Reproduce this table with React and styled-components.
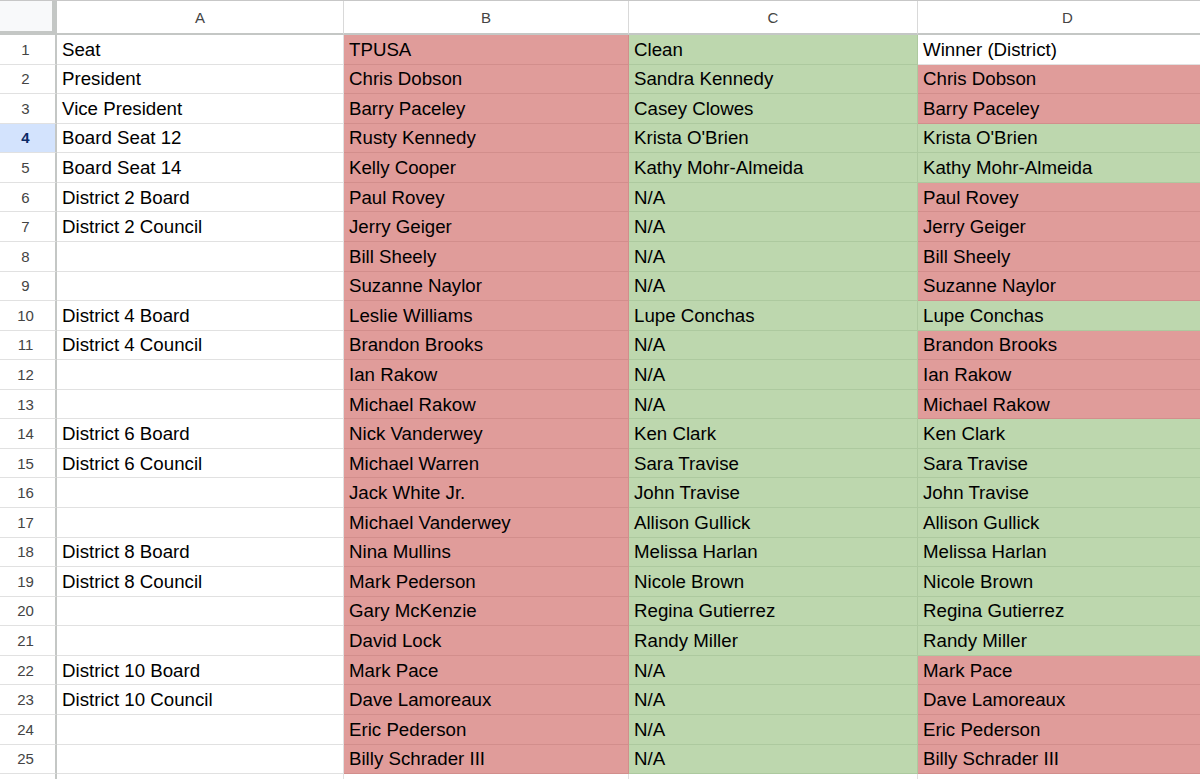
import styled, { createGlobalStyle } from 'styled-components';

const red = '#e09c9a';
const green = '#bdd7ae';
const ROW_H = 29.57;

const GlobalStyle = createGlobalStyle`
  html, body {
    margin: 0;
    padding: 0;
    background: #fff;
    overflow: hidden;
  }
  body {
    font-family: "Liberation Sans", Arial, sans-serif;
  }
`;

const Sheet = styled.div`
  width: 1200px;
  height: 779px;
  overflow: hidden;
  border-top: 1px solid #c7c7c7;
  box-sizing: border-box;
  display: grid;
  grid-template-columns: 57px 287px 285px 289px 300px;
  grid-template-rows: 34px;
  grid-auto-rows: ${ROW_H}px;
`;

const Corner = styled.div`
  background: #f8f9fa;
  border-right: 5px solid #c4c7c5;
  border-bottom: 4px solid #c4c7c5;
  box-sizing: border-box;
`;

const ColHead = styled.div`
  display: flex;
  align-items: center;
  justify-content: center;
  font-size: 15px;
  color: #444;
  background: #fff;
  border-right: 1px solid #d9d9d9;
  border-bottom: 2px solid #c4c7c5;
  box-sizing: border-box;
`;

const RowHead = styled.div`
  display: flex;
  align-items: center;
  justify-content: center;
  padding-right: 4px;
  font-size: 15px;
  color: ${(p) => (p.selected ? '#0b2a66' : '#444')};
  font-weight: ${(p) => (p.selected ? 700 : 400)};
  background: ${(p) => (p.selected ? '#d3e3fd' : '#fff')};
  border-right: 2px solid #c4c7c5;
  border-bottom: 1px solid #e1e1e1;
  box-sizing: border-box;
`;

const fills = { r: red, g: green };
const lines = { r: '#d28e8c', g: '#adc99f' };

const Cell = styled.div`
  display: flex;
  align-items: center;
  padding: 1px 0 0 5px;
  font-size: 18.7px;
  color: #000;
  white-space: nowrap;
  overflow: hidden;
  background: ${(p) => fills[p.fill] || '#fff'};
  border-right: 1px solid ${(p) => lines[p.fill] || '#e1e1e1'};
  border-bottom: 1px solid ${(p) => lines[p.fill] || '#e1e1e1'};
  box-sizing: border-box;
`;

const rows = [
  ['Seat', 'TPUSA', 'Clean', 'Winner (District)', ''],
  ['President', 'Chris Dobson', 'Sandra Kennedy', 'Chris Dobson', 'r'],
  ['Vice President', 'Barry Paceley', 'Casey Clowes', 'Barry Paceley', 'r'],
  ['Board Seat 12', 'Rusty Kennedy', "Krista O'Brien", "Krista O'Brien", 'g'],
  ['Board Seat 14', 'Kelly Cooper', 'Kathy Mohr-Almeida', 'Kathy Mohr-Almeida', 'g'],
  ['District 2 Board', 'Paul Rovey', 'N/A', 'Paul Rovey', 'r'],
  ['District 2 Council', 'Jerry Geiger', 'N/A', 'Jerry Geiger', 'r'],
  ['', 'Bill Sheely', 'N/A', 'Bill Sheely', 'r'],
  ['', 'Suzanne Naylor', 'N/A', 'Suzanne Naylor', 'r'],
  ['District 4 Board', 'Leslie Williams', 'Lupe Conchas', 'Lupe Conchas', 'g'],
  ['District 4 Council', 'Brandon Brooks', 'N/A', 'Brandon Brooks', 'r'],
  ['', 'Ian Rakow', 'N/A', 'Ian Rakow', 'r'],
  ['', 'Michael Rakow', 'N/A', 'Michael Rakow', 'r'],
  ['District 6 Board', 'Nick Vanderwey', 'Ken Clark', 'Ken Clark', 'g'],
  ['District 6 Council', 'Michael Warren', 'Sara Travise', 'Sara Travise', 'g'],
  ['', 'Jack White Jr.', 'John Travise', 'John Travise', 'g'],
  ['', 'Michael Vanderwey', 'Allison Gullick', 'Allison Gullick', 'g'],
  ['District 8 Board', 'Nina Mullins', 'Melissa Harlan', 'Melissa Harlan', 'g'],
  ['District 8 Council', 'Mark Pederson', 'Nicole Brown', 'Nicole Brown', 'g'],
  ['', 'Gary McKenzie', 'Regina Gutierrez', 'Regina Gutierrez', 'g'],
  ['', 'David Lock', 'Randy Miller', 'Randy Miller', 'g'],
  ['District 10 Board', 'Mark Pace', 'N/A', 'Mark Pace', 'r'],
  ['District 10 Council', 'Dave Lamoreaux', 'N/A', 'Dave Lamoreaux', 'r'],
  ['', 'Eric Pederson', 'N/A', 'Eric Pederson', 'r'],
  ['', 'Billy Schrader III', 'N/A', 'Billy Schrader III', 'r'],
];

export default function App() {
  return (
    <>
      <GlobalStyle />
      <Sheet>
        <Corner />
        {['A', 'B', 'C', 'D'].map((c) => (
          <ColHead key={c}>{c}</ColHead>
        ))}
        {rows.map(([seat, tp, clean, winner, win], i) => (
          <Row key={i} n={i + 1} seat={seat} tp={tp} clean={clean} winner={winner} win={win} />
        ))}
        <RowHead />
        <Cell />
        <Cell />
        <Cell />
        <Cell />
      </Sheet>
    </>
  );
}

function Row({ n, seat, tp, clean, winner, win }) {
  return (
    <>
      <RowHead selected={n === 4}>{n}</RowHead>
      <Cell>{seat}</Cell>
      <Cell fill="r">{tp}</Cell>
      <Cell fill="g">{clean}</Cell>
      <Cell fill={win}>{winner}</Cell>
    </>
  );
}
